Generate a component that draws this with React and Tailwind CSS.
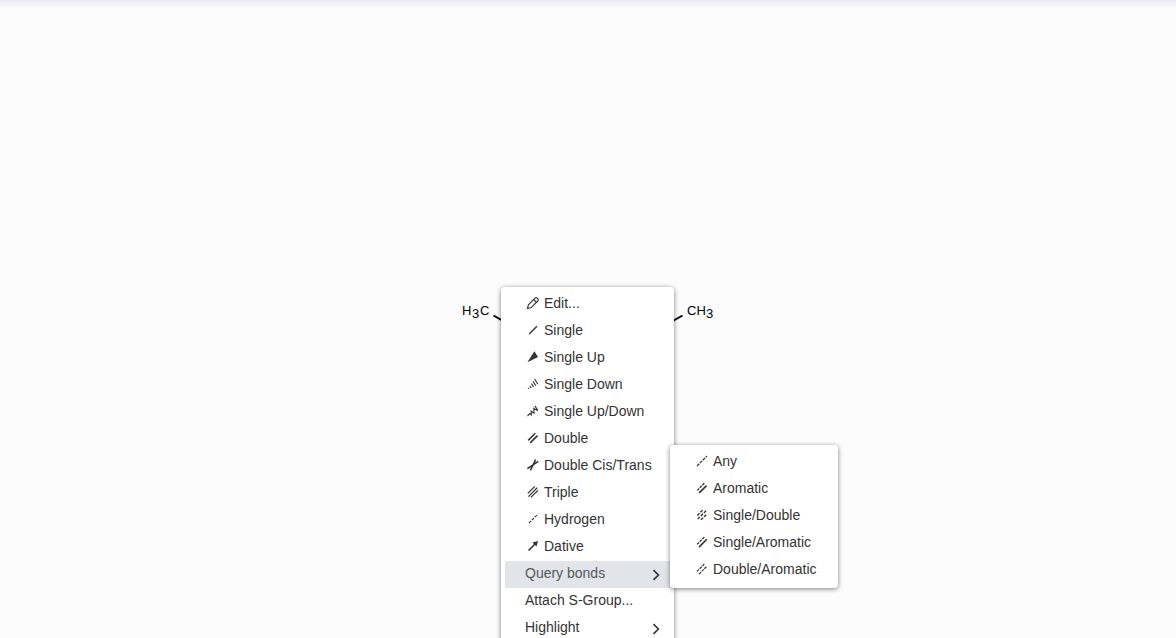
import React from 'react';

const icons = {
  edit: (
    <g fill="none" strokeWidth="1.1">
      <path d="M2.5 13.5 3.4 9.8 10 3.2a1.7 1.7 0 0 1 2.4 0l.4.4a1.7 1.7 0 0 1 0 2.4L6.2 12.6z" />
      <path d="M8.7 4.5 11.5 7.3" />
    </g>
  ),
  single: <path d="M4.3 11.9 11.9 4.2" strokeWidth="1.4" />,
  up: <path d="M2.4 13.2 9.4 2.2 13 8z" fill="currentColor" stroke="none" />,
  down: (
    <path
      d="M3.1 11.8 3.8 13M4.8 9.8 6.2 12M6.4 7.500 8.500 10.900M8 5.300 10.700 9.600M9.600 3 12.900 8.200"
      strokeWidth="1.1"
    />
  ),
  upDown: (
    <path
      d="M2.5 13 4.800 10.600 6.300 12 6.200 8.200 9 10.200 8.800 5.400 12.200 7.600M9.800 2.900 12.900 7.400"
      fill="none"
      strokeWidth="1.1"
    />
  ),
  double: <path d="M3.2 10.4 10.3 3.3M5.2 12.9 12.5 5.6" strokeWidth="1.5" />,
  cisTrans: <path d="M2.4 11.6 13.3 4.3M5.4 13.3 10.6 2.7" strokeWidth="1.5" />,
  triple: <path d="M2.8 9.4 9.8 2.4M3.4 12.6 12.2 3.8M5.9 13.4 12.9 6.4" strokeWidth="1.3" />,
  hydrogen: <path d="M3.9 12.1 11.9 4.1" strokeWidth="1.1" strokeDasharray="3 1.2" />,
  dative: (
    <>
      <path d="M3.6 12.5 10 6" strokeWidth="1.6" />
      <path d="M13 3 11.5 8.6 7.4 4.5z" fill="currentColor" stroke="none" />
    </>
  ),
  any: <path d="M3 13 13 3" strokeWidth="1.2" strokeDasharray="3.2 0.9" />,
  aromatic: (
    <>
      <path d="M3.2 10.4 10.3 3.3" strokeWidth="1.3" strokeDasharray="2.8 0.9" />
      <path d="M5.2 12.9 12.5 5.6" strokeWidth="1.6" />
    </>
  ),
  singleDouble: (
    <path
      d="M3.4 8.4 8.8 3M3.8 12 12 3.8M7 12.8 12.4 7.4"
      strokeWidth="1.4"
      strokeDasharray="3 1.300"
    />
  ),
  singleAromatic: (
    <>
      <path d="M3 10.4 10.3 3.1" strokeWidth="1.3" strokeDasharray="2.8 1" />
      <path d="M5 13.1 12.8 5.3" strokeWidth="1.6" />
    </>
  ),
  doubleAromatic: (
    <path d="M3 10.4 10.3 3.1M5 13.1 12.8 5.3" strokeWidth="1.2" strokeDasharray="2.8 1" />
  ),
};

const bonds = [
  ['edit', 'Edit...'],
  ['single', 'Single'],
  ['up', 'Single Up'],
  ['down', 'Single Down'],
  ['upDown', 'Single Up/Down'],
  ['double', 'Double'],
  ['cisTrans', 'Double Cis/Trans'],
  ['triple', 'Triple'],
  ['hydrogen', 'Hydrogen'],
  ['dative', 'Dative'],
];

const queryBonds = [
  ['any', 'Any'],
  ['aromatic', 'Aromatic'],
  ['singleDouble', 'Single/Double'],
  ['singleAromatic', 'Single/Aromatic'],
  ['doubleAromatic', 'Double/Aromatic'],
];

function Chevron() {
  return (
    <svg aria-hidden="true" viewBox="0 0 8 12" className="mt-1 h-3 w-2 shrink-0">
      <path d="M1.5 1.1 6.4 6 1.5 10.9" fill="none" stroke="currentColor" strokeWidth="1.6" />
    </svg>
  );
}

function Item({ icon, label, active, arrow, children }) {
  const tone = active ? 'bg-[#e1e5ea] text-[#585858]' : 'hover:bg-[#e1e5ea]';
  return (
    <li role="none" className="relative">
      <button
        type="button"
        role="menuitem"
        aria-haspopup={arrow ? 'menu' : undefined}
        aria-expanded={arrow ? Boolean(active) : undefined}
        className={`flex h-[27px] w-full items-center gap-[3px] pr-2.5 pb-[3px] pl-5 text-left whitespace-nowrap ${tone}`}
      >
        {icon && (
          <svg
            aria-hidden="true"
            viewBox="0 0 16 16"
            stroke="currentColor"
            className="h-4 w-4 shrink-0"
          >
            {icons[icon]}
          </svg>
        )}
        <span>{label}</span>
        {arrow && (
          <span className="ml-auto flex text-[#333333]">
            <Chevron />
          </span>
        )}
      </button>
      {children}
    </li>
  );
}

const panel =
  'absolute rounded bg-white p-1 text-sm text-[#333333] shadow-[0_1px_5px_rgba(0,0,0,0.5)]';

export default function App() {
  return (
    <main className="relative h-screen overflow-hidden bg-[#fcfcfc] font-[Helvetica,'Liberation_Sans',Arial,sans-serif]">
      <div className="h-2 bg-linear-to-b from-[#ebebf0] to-[#fcfcfc]" />
      <svg
        role="img"
        aria-label="Molecule"
        viewBox="0 0 256 40"
        className="absolute top-[300px] left-1/2 h-10 w-64 -translate-x-1/2 font-['Liberation_Sans',Arial,sans-serif] text-[13px]"
      >
        <text x="2" y="15">H</text>
        <text x="12" y="18">3</text>
        <text x="20" y="15">C</text>
        <path d="M33.5 15.5 52 26M222.5 15.5 204 26" stroke="#000" strokeWidth="2" />
        <text x="227" y="15">CH</text>
        <text x="246" y="18">3</text>
      </svg>
      <ul role="menu" className={`${panel} top-[287px] left-[501px] w-[173px] pb-10`}>
        {bonds.map(([icon, label]) => (
          <Item key={label} icon={icon} label={label} />
        ))}
        <Item label="Query bonds" active arrow>
          <ul role="menu" className={`${panel} bottom-0 left-full w-[168px]`}>
            {queryBonds.map(([icon, label]) => (
              <Item key={label} icon={icon} label={label} />
            ))}
          </ul>
        </Item>
        <Item label="Attach S-Group..." />
        <Item label="Highlight" arrow />
      </ul>
    </main>
  );
}
